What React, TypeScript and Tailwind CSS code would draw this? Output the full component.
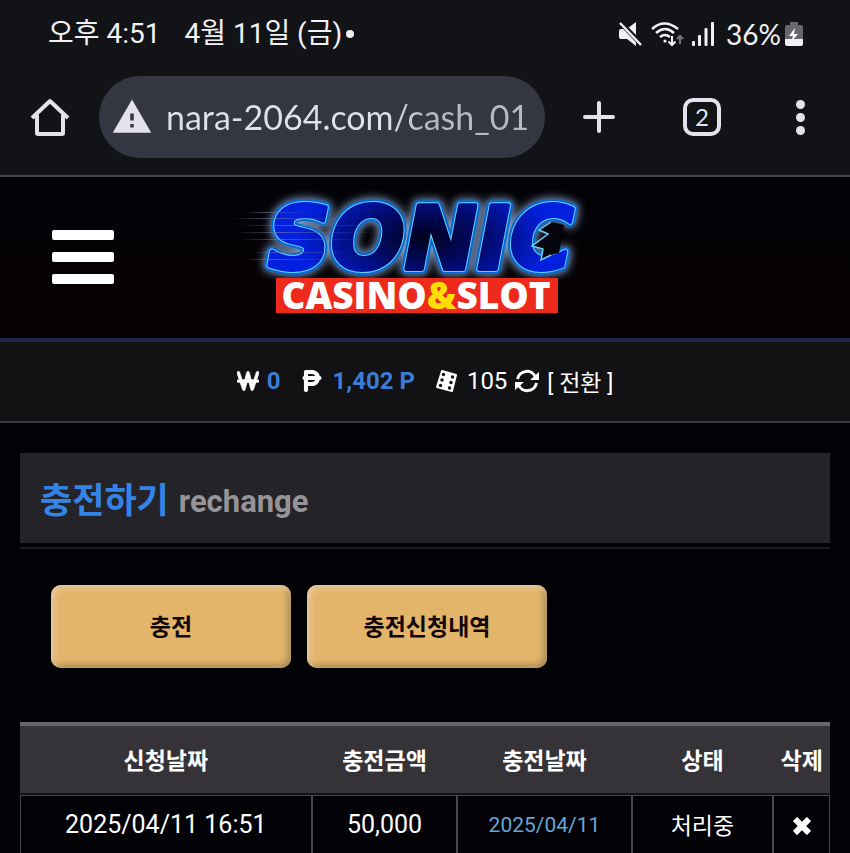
import { MdWarning } from "react-icons/md";
import { FaWonSign, FaPesetaSign } from "react-icons/fa6";

const columns = ["신청날짜", "충전금액", "충전날짜", "상태", "삭제"];

function StatusBar() {
  return (
    <div className="flex items-center justify-between pt-[10px] pr-[47px] pl-12 leading-[48px] text-[#f1f1f5]">
      <div className="flex items-center gap-6 text-[28px]">
        <span>오후 4:51</span>
        <span className="flex items-center gap-1">
          4월 11일 (금)
          <span className="size-2 rounded-full bg-[#f1f1f5]" />
        </span>
      </div>
      <div className="flex items-center gap-2">
        <svg aria-label="음소거" viewBox="0 0 24 24" className="size-6" fill="currentColor">
          <path d="M1 9q0-2 2-2h3l4-1 8 9v9L9 17H3q-2 0-2-2z" />
          <path d="M10 6l8-6v15z" />
          <path d="M1 -1l24 25" stroke="#121317" strokeWidth="5" />
          <path d="M2 1l21 22" stroke="currentColor" strokeWidth="2.500" />
        </svg>
        <svg aria-label="와이파이" viewBox="0 0 34 26" className="h-[26px] w-[34px]" fill="none" stroke="currentColor" strokeWidth="2.500">
          <path d="M2 8q12-11 26 0" />
          <path d="M6 12q9-8 18 0" />
          <path d="M10 16q5-4 10 0" />
          <circle cx="15" cy="20" r="1.600" fill="currentColor" stroke="none" />
          <path d="M22 15v9M18.500 20.500l3.500 3.500 3.500-3.500" strokeWidth="2" />
          <path d="M30 23v-8M27 18l3-3 3 3" stroke="#77777b" strokeWidth="2" />
        </svg>
        <svg aria-label="신호" viewBox="0 0 22 24" className="h-6 w-[22px]" fill="currentColor">
          <rect x="0" y="19" width="3" height="5" rx="1" />
          <rect x="6" y="13" width="3" height="11" rx="1" />
          <rect x="12.500" y="6" width="3" height="18" rx="1" />
          <rect x="19" y="0" width="3" height="24" rx="1" />
        </svg>
        <div className="flex items-center gap-1 pl-1">
          <span className="font-['Lato','Noto_Sans_CJK_KR',sans-serif] text-[28px]">36%</span>
          <svg aria-label="배터리" viewBox="0 0 18 24" className="h-6 w-[18px]">
            <path d="M5 0h8v3h3q2 0 2 2v12H0V5q0-2 2-2h3z" fill="#68686c" />
            <path d="M0 17h18v5q0 2-2 2H2q-2 0-2-2z" fill="#f1f1f5" />
            <path d="M10 6l-6 8h4l-2 6 7-8H9z" fill="#fff" />
          </svg>
        </div>
      </div>
    </div>
  );
}

function BrowserBar() {
  return (
    <div className="flex items-center border-b-2 border-[#47474b] pt-[18px] pr-[45px] pb-[17px] pl-[30px] text-[#e3e2ed]">
      <button aria-label="홈" className="shrink-0">
        <svg viewBox="0 0 40 40" className="size-10" fill="none" stroke="currentColor" strokeWidth="4" strokeLinejoin="round">
          <path d="M2 21L20 4l18 17M7 18v18q0 1 1 1h24q1 0 1-1V18" />
        </svg>
      </button>
      <label className="ml-[29px] flex h-[82px] min-w-0 flex-1 items-center gap-[13px] rounded-full bg-[#343642] pr-3 pl-3">
        <MdWarning className="size-[42px] shrink-0" />
        <input
          aria-label="주소"
          defaultValue="nara-2064.com/cash_01"
          className="w-full min-w-0 bg-linear-to-r from-[#e0e0ee] from-60% to-[#b8b9c6] to-70% bg-clip-text pb-[2px] font-['Lato',sans-serif] text-[34px] text-transparent outline-none"
        />
      </label>
      <button aria-label="새 탭" className="ml-9 shrink-0">
        <svg viewBox="0 0 36 36" className="size-9" stroke="currentColor" strokeWidth="4" strokeLinecap="round">
          <path d="M18 4v28M4 18h28" />
        </svg>
      </button>
      <button aria-label="탭 2개" className="ml-[66px] flex size-[38px] shrink-0 items-center justify-center rounded-[10px] border-4 border-current font-['Lato',sans-serif] text-2xl">
        2
      </button>
      <button aria-label="메뉴" className="ml-[75px] flex shrink-0 flex-col gap-1">
        <span className="size-[9px] rounded-full bg-current" />
        <span className="size-[9px] rounded-full bg-current" />
        <span className="size-[9px] rounded-full bg-current" />
      </button>
    </div>
  );
}

function Logo() {
  return (
    <svg role="img" aria-label="SONIC CASINO&SLOT" viewBox="0 0 370 140" className="h-[140px] w-[370px] overflow-visible">
      <defs>
        <radialGradient id="letters" gradientUnits="userSpaceOnUse" cx="195" cy="58" r="160" gradientTransform="translate(0 29) scale(1 .5)">
          <stop offset="0" stopColor="#01011c" />
          <stop offset=".4" stopColor="#020b72" />
          <stop offset=".8" stopColor="#0320df" />
        </radialGradient>
        <filter id="glow" x="-10%" y="-30%" width="120%" height="160%">
          <feGaussianBlur stdDeviation="4" />
        </filter>
        <linearGradient id="streak">
          <stop offset="0" stopColor="#7680a8" stopOpacity="0" />
          <stop offset=".3" stopColor="#7680a8" stopOpacity=".6" />
          <stop offset="1" stopColor="#4055c0" stopOpacity="0" />
        </linearGradient>
        <text id="wordmark" x="38" y="89" fontFamily="DejaVu Sans, sans-serif" fontSize="87" fontWeight="700" fontStyle="oblique">
          SONIC
        </text>
      </defs>
      <g strokeLinejoin="round">
        <use href="#wordmark" fill="#7f9dc4" stroke="#7f9dc4" strokeWidth="12" filter="url(#glow)" />
        <use href="#wordmark" fill="#0868ce" stroke="#0868ce" strokeWidth="10" />
        <use href="#wordmark" fill="url(#letters)" stroke="#68cfff" strokeWidth="6" />
        <use href="#wordmark" fill="url(#letters)" stroke="url(#letters)" strokeWidth="4" />
      </g>
      <path d="M334 45l-13-3-12 8 9 4-16 12 11 3-2 11 10-5 8-2z" fill="#04040c" />
      <path d="M321 42l-12 8 9 4-16 12 11 3-2 11 10-5" fill="none" stroke="#68cfff" strokeWidth="1.500" />
      <g fill="url(#streak)">
        <rect x="14" y="32" width="70" height="1" />
        <rect x="2" y="38" width="120" height="1" />
        <rect x="10" y="45" width="150" height="1" />
        <rect x="4" y="52" width="150" height="1" />
        <rect x="10" y="59" width="130" height="1" />
        <rect x="20" y="72" width="110" height="1" />
        <rect x="14" y="79" width="90" height="1" />
      </g>
      <rect x="46" y="98" width="282" height="35" fill="#ed2a1c" />
      <text x="186" y="129" textAnchor="middle" fill="#fff" fontFamily="Open Sans, sans-serif" fontSize="37" fontWeight="800">
        CASINO<tspan fill="#ffdd08">&amp;</tspan>SLOT
      </text>
    </svg>
  );
}

function SiteHeader() {
  return (
    <header className="grid grid-cols-[1fr_auto_1fr] items-center border-b-4 border-[#202748] bg-linear-to-b from-[#020207] to-[#080103] pt-[3px] pr-5 pb-[18px]">
      <button aria-label="메뉴 열기" className="ml-[52px] flex w-[62px] flex-col gap-3 pt-[14px]">
        <span className="h-[10px] w-full rounded-xs bg-white" />
        <span className="h-[10px] w-full rounded-xs bg-white" />
        <span className="h-[10px] w-full rounded-xs bg-white" />
      </button>
      <a href="#home">
        <Logo />
      </a>
    </header>
  );
}

function Balance() {
  return (
    <div className="flex h-[81px] items-center justify-center border-b-2 border-[#3b3b3e] bg-[#121114] pb-[2px] text-2xl text-white">
      <FaWonSign className="size-[22px]" stroke="currentColor" strokeWidth={16} />
      <strong className="ml-2 font-bold text-[#3b7dd4]">0</strong>
      <FaPesetaSign className="ml-5 size-6 overflow-visible" stroke="currentColor" strokeWidth={24} />
      <strong className="ml-2 font-bold text-[#3b7dd4]">1,402 P</strong>
      <svg aria-label="게임" viewBox="0 0 24 24" className="ml-5 size-6">
        <path d="M7 2l14 4-4 16L2 18z" fill="#fff" stroke="#fff" strokeWidth="2" strokeLinejoin="round" />
        <g fill="#121114">
          <circle cx="8.500" cy="5.500" r="1.700" />
          <circle cx="7" cy="11" r="1.700" />
          <circle cx="5.500" cy="16.500" r="1.700" />
          <circle cx="17.500" cy="8" r="1.700" />
          <circle cx="16" cy="13.500" r="1.700" />
          <circle cx="14.500" cy="19" r="1.700" />
        </g>
      </svg>
      <span className="ml-2">105</span>
      <svg viewBox="0 0 24 24" className="ml-2 size-6" fill="none" stroke="currentColor" strokeWidth="3">
        <path d="M2.500 10a9.500 9.500 0 0 1 18-2M21.500 14a9.500 9.500 0 0 1-18 2" />
        <path d="M24 3v8h-9zM0 21v-8h9z" fill="currentColor" stroke="none" />
      </svg>
      <button className="ml-2 pt-2 text-[23px]">[ 전환 ]</button>
    </div>
  );
}

export default function App() {
  return (
    <div className="min-h-screen bg-[#020105] font-['Roboto','Noto_Sans_CJK_KR',sans-serif]">
      <div className="bg-[#121317]">
        <StatusBar />
        <BrowserBar />
      </div>
      <SiteHeader />
      <Balance />
      <main className="px-5 pt-[30px]">
        <div className="border-b-2 border-[#1b1b1d] pb-1">
          <h1 className="flex h-[90px] items-center gap-[10px] bg-[#242327] px-5 pt-2 font-bold">
            <span className="text-[35px] text-[#3484e8]">충전하기</span>
            <span className="text-[31px] text-[#969498]">rechange</span>
          </h1>
        </div>
        <div className="flex gap-4 px-[31px] pt-9 pb-[54px] text-[23px] font-bold text-[#120708]">
          <button className="h-[83px] w-60 rounded-[10px] bg-[#e2b56b] pt-1 shadow-[inset_3px_3px_6px_#e8c9a0,inset_-3px_-3px_6px_#a58755]">충전</button>
          <button className="h-[83px] w-60 rounded-[10px] bg-[#e2b56b] pt-1 shadow-[inset_3px_3px_6px_#e8c9a0,inset_-3px_-3px_6px_#a58755]">충전신청내역</button>
        </div>
        <table className="w-full table-fixed border-separate border-spacing-0 text-center text-[25px] text-white">
          <colgroup>
            <col className="w-[36%]" />
            <col className="w-[18%]" />
            <col className="w-[21.500%]" />
            <col className="w-[17.500%]" />
            <col />
          </colgroup>
          <thead>
            <tr className="h-[73px] bg-[#353337]">
              {columns.map((name) => (
                <th key={name} scope="col" className="border-t-4 border-b-2 border-t-[#676569] border-b-[#141316] p-0 pt-[6px] text-[23px] font-bold">
                  {name}
                </th>
              ))}
            </tr>
          </thead>
          <tbody>
            <tr className="h-[58px]">
              <td className="border border-b-0 border-[#48474b] p-0">2025/04/11 16:51</td>
              <td className="border border-b-0 border-[#48474b] p-0">50,000</td>
              <td className="border border-b-0 border-[#48474b] p-0 pt-[2px] text-[21px] text-[#66a5d6]">2025/04/11</td>
              <td className="border border-b-0 border-[#48474b] p-0 pt-[6px] text-[23px]">처리중</td>
              <td className="border border-b-0 border-[#48474b] p-0">
                <button aria-label="삭제" className="align-middle">
                  <svg viewBox="0 0 18 18" className="size-[18px]" stroke="#fff" strokeWidth="6">
                    <path d="M2 2l14 14M16 2L2 16" />
                  </svg>
                </button>
              </td>
            </tr>
          </tbody>
        </table>
      </main>
    </div>
  );
}
